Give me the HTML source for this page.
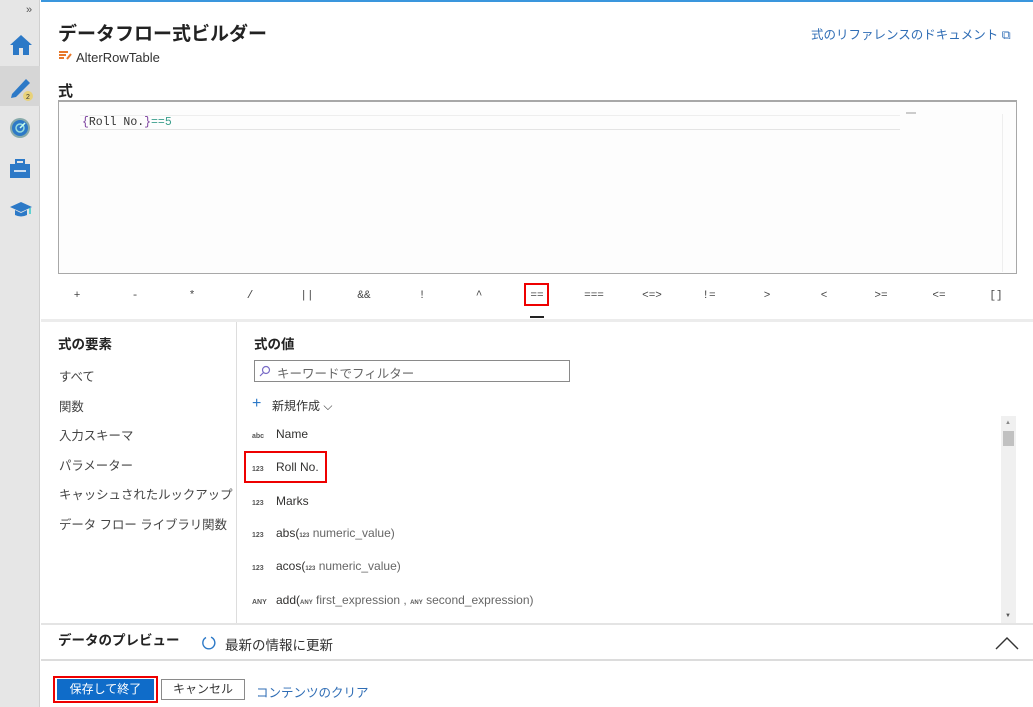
<!DOCTYPE html>
<html><head><meta charset="utf-8">
<style>
*{box-sizing:border-box;margin:0;padding:0}
body{width:1033px;height:707px;overflow:hidden;background:#fff;font-family:"Liberation Sans","Noto Sans CJK JP",sans-serif;color:#323130;position:relative}
.a{position:absolute}
.side{left:0;top:0;width:40px;height:707px;background:#e6e6e6;border-right:1px solid #d0d0d0}
.op{position:absolute;top:290px;font-size:11px;color:#444;font-family:"Liberation Mono",monospace;transform:translateX(-50%)}
.li{position:absolute;left:59px;font-size:12.4px;color:#444}
.row{position:absolute;left:252px;font-size:12px;color:#323130}
.t{display:inline-block;width:24px;font-size:7px;font-weight:bold;color:#555}
.g{color:#666}
.s{font-size:6px;font-weight:bold;color:#555}
</style></head><body>
<div class="a side"></div>
<div class="a" style="left:41px;top:0;width:992px;height:2px;background:#3a96dd"></div>
<div class="a" style="left:26px;top:4px;font-size:11px;color:#555">»</div>
<svg class="a" style="left:9px;top:34px" width="24" height="22" viewBox="0 0 24 22"><path d="M12 1 L1 11 H4 V21 H10 V14 H14 V21 H20 V11 H23 Z" fill="#2c79c7"/></svg>
<div class="a" style="left:0;top:66px;width:40px;height:40px;background:#d6d6d6"></div>
<svg class="a" style="left:9px;top:74px" width="26" height="28" viewBox="0 0 26 28"><path d="M3 20 L17 5 L21 9 L7 23 L2 24 Z" fill="#2c79c7"/><circle cx="19" cy="22" r="5" fill="#e8d27a"/><text x="17" y="25" font-size="7" fill="#333" font-family="Liberation Sans">2</text></svg>
<svg class="a" style="left:9px;top:117px" width="22" height="22" viewBox="0 0 22 22"><circle cx="11" cy="11" r="10" fill="#8aa"/><circle cx="11" cy="11" r="8" fill="#2c79c7"/><circle cx="11" cy="11" r="4" fill="none" stroke="#9dd" stroke-width="1.5"/><path d="M11 11 L16 6" stroke="#cfe" stroke-width="1.5"/></svg>
<svg class="a" style="left:9px;top:158px" width="22" height="22" viewBox="0 0 22 22"><rect x="7" y="2" width="8" height="4" fill="none" stroke="#2c79c7" stroke-width="2"/><rect x="1" y="6" width="20" height="14" fill="#2c79c7"/><path d="M5 13 H17" stroke="#fff" stroke-width="1.5"/></svg>
<svg class="a" style="left:9px;top:200px" width="24" height="20" viewBox="0 0 24 20"><path d="M12 2 L23 7 L12 12 L1 7 Z" fill="#2c79c7"/><path d="M6 10 V15 Q12 18 18 15 V10 L12 13 Z" fill="#2c79c7"/><path d="M21 8 V14" stroke="#3cc" stroke-width="1.5"/></svg>

<div class="a" style="left:58px;top:19px;font-size:19px;font-weight:bold;color:#222">データフロー式ビルダー</div>
<svg class="a" style="left:58px;top:50px" width="14" height="12" viewBox="0 0 14 12"><path d="M1 2H10M1 5H8M1 8H6" stroke="#e8782a" stroke-width="2"/><path d="M9 9 L13 4" stroke="#e8782a" stroke-width="2"/></svg>
<div class="a" style="left:76px;top:50px;font-size:13px;color:#333">AlterRowTable</div>
<div class="a" style="left:811px;top:24px;font-size:12.5px;color:#2f6db5">式のリファレンスのドキュメント ⧉</div>
<div class="a" style="left:58px;top:80px;font-size:15px;font-weight:bold;color:#222">式</div>

<div class="a" style="left:58px;top:100px;width:959px;height:174px;border:1px solid #a8a8a8;border-top-width:2px;background:#fdfdfd"></div>
<div class="a" style="left:80px;top:115px;width:820px;height:15px;border-top:1px solid #eee;border-bottom:1px solid #e4e4e4"></div>
<div class="a" style="left:82px;top:116px;font-family:'Liberation Mono',monospace;font-size:11.5px;color:#333"><span style="color:#7a3e9d">{</span>Roll No.<span style="color:#7a3e9d">}</span><span style="color:#3a9e8c">==5</span></div>
<div class="a" style="left:906px;top:112px;width:10px;height:2px;background:#ccc"></div>
<div class="a" style="left:1002px;top:114px;width:13px;height:158px;border-left:1px solid #eee"></div>

<div class="op" style="left:77px">+</div><div class="op" style="left:135px">-</div><div class="op" style="left:192px">*</div><div class="op" style="left:250px">/</div><div class="op" style="left:307px">||</div><div class="op" style="left:364px">&amp;&amp;</div><div class="op" style="left:422px">!</div><div class="op" style="left:479px">^</div><div class="op" style="left:537px">==</div><div class="op" style="left:594px">===</div><div class="op" style="left:652px">&lt;=&gt;</div><div class="op" style="left:709px">!=</div><div class="op" style="left:767px">&gt;</div><div class="op" style="left:824px">&lt;</div><div class="op" style="left:881px">&gt;=</div><div class="op" style="left:939px">&lt;=</div><div class="op" style="left:996px">[]</div>
<div class="a" style="left:524px;top:283px;width:25px;height:23px;border:2px solid #e00"></div>
<div class="a" style="left:530px;top:316px;width:14px;height:2px;background:#222"></div>
<div class="a" style="left:41px;top:319px;width:992px;height:3px;background:#ececec"></div>

<div class="a" style="left:236px;top:322px;width:1px;height:302px;background:#ddd"></div>
<div class="a" style="left:58px;top:333px;font-size:13.5px;font-weight:bold;color:#222">式の要素</div>
<div class="li" style="top:367px">すべて</div>
<div class="li" style="top:397px">関数</div>
<div class="li" style="top:426px">入力スキーマ</div>
<div class="li" style="top:456px">パラメーター</div>
<div class="li" style="top:485px">キャッシュされたルックアップ</div>
<div class="li" style="top:515px">データ フロー ライブラリ関数</div>

<div class="a" style="left:254px;top:333px;font-size:13.5px;font-weight:bold;color:#222">式の値</div>
<div class="a" style="left:254px;top:360px;width:316px;height:22px;border:1px solid #8a8a8a;font-size:12.5px;color:#666;padding:2px 0 0 22px">キーワードでフィルター</div>
<svg class="a" style="left:259px;top:365px" width="12" height="12" viewBox="0 0 12 12"><circle cx="7" cy="5" r="3.5" fill="none" stroke="#7a6cc7" stroke-width="1.2"/><path d="M4.5 7.5 L1 11" stroke="#7a6cc7" stroke-width="1.2"/></svg>
<div class="a" style="left:252px;top:395px;font-size:16px;color:#2c79c7">+</div>
<div class="a" style="left:272px;top:397px;font-size:12px;color:#333">新規作成 ⌵</div>

<div class="row" style="top:427px"><span class="t">abc</span>Name</div>
<div class="row" style="top:460px"><span class="t">123</span>Roll No.</div>
<div class="a" style="left:244px;top:451px;width:83px;height:32px;border:2px solid #e00"></div>
<div class="row" style="top:494px"><span class="t">123</span>Marks</div>
<div class="row" style="top:526px"><span class="t">123</span>abs(<span class="s">123</span> <span class="g">numeric_value)</span></div>
<div class="row" style="top:559px"><span class="t">123</span>acos(<span class="s">123</span> <span class="g">numeric_value)</span></div>
<div class="row" style="top:593px"><span class="t">ANY</span>add(<span class="s">ANY</span> <span class="g">first_expression , <span class="s">ANY</span> second_expression)</span></div>

<div class="a" style="left:1001px;top:416px;width:15px;height:207px;background:#f0f0f0"></div>
<div class="a" style="left:1003px;top:431px;width:11px;height:15px;background:#c1c1c1"></div>
<div class="a" style="left:1005px;top:420px;font-size:6px;color:#888">▲</div>
<div class="a" style="left:1005px;top:613px;font-size:6px;color:#555">▼</div>

<div class="a" style="left:41px;top:623px;width:992px;height:2px;background:#e4e4e4"></div>
<div class="a" style="left:58px;top:629px;font-size:13.5px;font-weight:bold;color:#222">データのプレビュー</div>
<svg class="a" style="left:201px;top:635px" width="16" height="16" viewBox="0 0 16 16"><path d="M5 2.5 A6 6 0 1 0 10 2.2" fill="none" stroke="#2c79c7" stroke-width="1.4"/></svg>
<div class="a" style="left:225px;top:634px;font-size:13.5px;color:#333">最新の情報に更新</div>
<svg class="a" style="left:995px;top:636px" width="24" height="14" viewBox="0 0 24 14"><path d="M1 13 L12 2 L23 13" fill="none" stroke="#333" stroke-width="1.4"/></svg>
<div class="a" style="left:41px;top:659px;width:992px;height:2px;background:#dcdcdc"></div>

<div class="a" style="left:53px;top:676px;width:105px;height:27px;border:2px solid #e00"></div>
<div class="a" style="left:57px;top:679px;width:97px;height:21px;background:#0f6cc9;color:#fff;font-size:12px;text-align:center;line-height:21px">保存して終了</div>
<div class="a" style="left:161px;top:679px;width:84px;height:21px;border:1px solid #8a8a8a;font-size:12px;text-align:center;line-height:19px;color:#333">キャンセル</div>
<div class="a" style="left:256px;top:682px;font-size:12.5px;color:#2f6db5">コンテンツのクリア</div>
</body></html>
